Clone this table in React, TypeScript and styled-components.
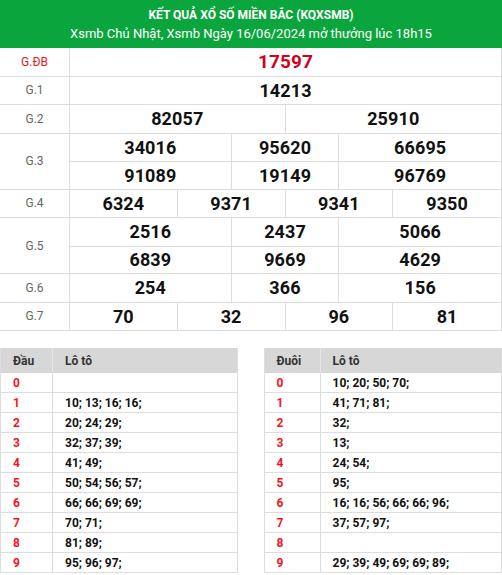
import React from "react";
import styled, { createGlobalStyle } from "styled-components";

const Global = createGlobalStyle`
  html, body { margin: 0; padding: 0; background: #fff; }
  body { font-family: Roboto, "Liberation Sans", Arial, sans-serif; }
  * { box-sizing: border-box; }
`;

const Page = styled.div`
  width: 502px;
`;

const Header = styled.div`
  background: #0aa63d;
  color: #fff;
  height: 48px;
  display: flex;
  flex-direction: column;
  align-items: center;
  justify-content: center;
  gap: 3px;
  padding-top: 1px;
  text-align: center;
`;

const Title = styled.div`
  font-size: 12px;
  font-weight: 700;
  line-height: 15px;
`;

const Sub = styled.div`
  font-size: 13px;
  line-height: 16px;
`;

const Results = styled.div`
  border-right: 1px solid #ddd;
`;

const Prize = styled.div`
  display: flex;
  border-bottom: 1px solid #ddd;
`;

const Label = styled.div<{ $special?: boolean }>`
  width: 70px;
  flex: none;
  border-right: 1px solid #ddd;
  display: flex;
  align-items: center;
  justify-content: center;
  font-size: 12px;
  color: ${(p) => (p.$special ? "#e41b1b" : "#666")};
`;

const Values = styled.div`
  flex: 1;
  display: grid;
  grid-template-columns: repeat(8, 1fr);
  grid-auto-rows: 27.5px;
`;

const Cell = styled.div<{ $span: number; $last: boolean; $top: boolean; $red?: boolean }>`
  grid-column: span ${(p) => p.$span};
  display: flex;
  align-items: center;
  justify-content: center;
  border-right: ${(p) => (p.$last ? "none" : "1px solid #ddd")};
  border-top: ${(p) => (p.$top ? "1px solid #ddd" : "none")};
  font-size: ${(p) => (p.$red ? "19px" : "18px")};
  font-weight: 700;
  color: ${(p) => (p.$red ? "#d0021b" : "#111")};
  letter-spacing: 0.1px;
`;

const Loto = styled.div`
  display: flex;
  justify-content: space-between;
  margin-top: 17px;
`;

const LTable = styled.div<{ $first: number }>`
  width: 47.5%;
  display: grid;
  grid-template-columns: ${(p) => p.$first}px 1fr;
  grid-template-rows: 25px;
  grid-auto-rows: 20px;
  border: 1px solid #ddd;
  border-top: none;
  border-bottom: none;
`;

const Th = styled.div<{ $first?: boolean }>`
  background: #d7d7d7;
  display: flex;
  align-items: center;
  padding-left: 12px;
  font-size: 12px;
  font-weight: 700;
  color: #333;
  border-right: ${(p) => (p.$first ? "1px solid #e6e6e6" : "none")};
`;

const Td = styled.div<{ $first?: boolean }>`
  display: flex;
  align-items: center;
  padding-left: 12px;
  font-size: 12px;
  font-weight: 700;
  color: ${(p) => (p.$first ? "#f5141e" : "#111")};
  border-bottom: 1px solid #ddd;
  border-right: ${(p) => (p.$first ? "1px solid #ddd" : "none")};
  white-space: nowrap;
`;

type Row = { label: string; special?: boolean; rows: { v: string; span: number }[][] };

const prizes: Row[] = [
  { label: "G.ĐB", special: true, rows: [[{ v: "17597", span: 8 }]] },
  { label: "G.1", rows: [[{ v: "14213", span: 8 }]] },
  { label: "G.2", rows: [[{ v: "82057", span: 4 }, { v: "25910", span: 4 }]] },
  {
    label: "G.3",
    rows: [
      [{ v: "34016", span: 3 }, { v: "95620", span: 2 }, { v: "66695", span: 3 }],
      [{ v: "91089", span: 3 }, { v: "19149", span: 2 }, { v: "96769", span: 3 }],
    ],
  },
  {
    label: "G.4",
    rows: [[{ v: "6324", span: 2 }, { v: "9371", span: 2 }, { v: "9341", span: 2 }, { v: "9350", span: 2 }]],
  },
  {
    label: "G.5",
    rows: [
      [{ v: "2516", span: 3 }, { v: "2437", span: 2 }, { v: "5066", span: 3 }],
      [{ v: "6839", span: 3 }, { v: "9669", span: 2 }, { v: "4629", span: 3 }],
    ],
  },
  { label: "G.6", rows: [[{ v: "254", span: 3 }, { v: "366", span: 2 }, { v: "156", span: 3 }]] },
  {
    label: "G.7",
    rows: [[{ v: "70", span: 2 }, { v: "32", span: 2 }, { v: "96", span: 2 }, { v: "81", span: 2 }]],
  },
];

const dau = [
  "",
  "10; 13; 16; 16;",
  "20; 24; 29;",
  "32; 37; 39;",
  "41; 49;",
  "50; 54; 56; 57;",
  "66; 66; 69; 69;",
  "70; 71;",
  "81; 89;",
  "95; 96; 97;",
];

const duoi = [
  "10; 20; 50; 70;",
  "41; 71; 81;",
  "32;",
  "13;",
  "24; 54;",
  "95;",
  "16; 16; 56; 66; 66; 96;",
  "37; 57; 97;",
  "",
  "29; 39; 49; 69; 69; 89;",
];

function LotoTable({ head, first, data }: { head: string; first: number; data: string[] }) {
  return (
    <LTable $first={first}>
      <Th $first>{head}</Th>
      <Th>Lô tô</Th>
      {data.map((d, i) => (
        <React.Fragment key={i}>
          <Td $first>{i}</Td>
          <Td>{d}</Td>
        </React.Fragment>
      ))}
    </LTable>
  );
}

export default function App() {
  return (
    <Page>
      <Global />
      <Header>
        <Title>KẾT QUẢ XỔ SỐ MIỀN BẮC (KQXSMB)</Title>
        <Sub>Xsmb Chủ Nhật, Xsmb Ngày 16/06/2024 mở thưởng lúc 18h15</Sub>
      </Header>
      <Results>
        {prizes.map((p) => (
          <Prize key={p.label}>
            <Label $special={p.special}>{p.label}</Label>
            <Values>
              {p.rows.map((r, ri) =>
                r.map((c, ci) => (
                  <Cell
                    key={`${ri}-${ci}`}
                    $span={c.span}
                    $last={ci === r.length - 1}
                    $top={ri > 0}
                    $red={p.special}
                  >
                    {c.v}
                  </Cell>
                ))
              )}
            </Values>
          </Prize>
        ))}
      </Results>
      <Loto>
        <LotoTable head="Đầu" first={52} data={dau} />
        <LotoTable head="Đuôi" first={56} data={duoi} />
      </Loto>
    </Page>
  );
}
